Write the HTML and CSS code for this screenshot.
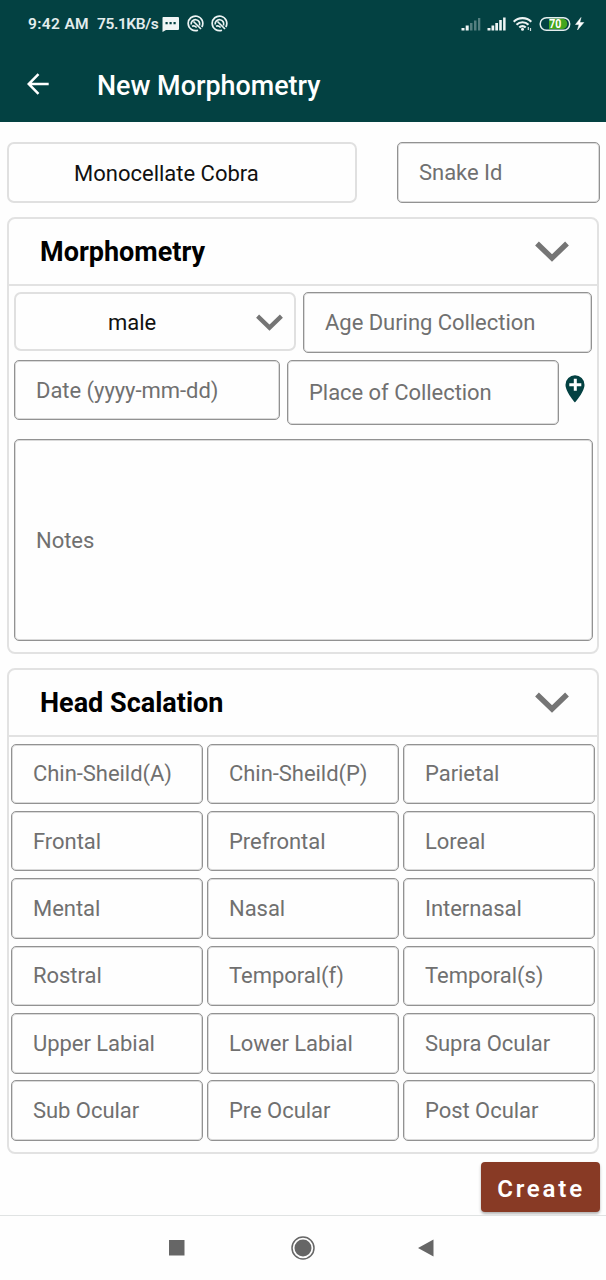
FILE: index.html
```html
<!DOCTYPE html>
<html lang="en">
<head>
<meta charset="utf-8">
<title>New Morphometry</title>
<link rel="stylesheet" href="styles.css">
</head>
<body>
<div class="screen">
  <header class="top">
    <div class="status">
      <span class="clock">9:42 AM</span>
      <span class="speed">75.1KB/s</span>
      <svg class="chat" width="17" height="16" viewBox="0 0 17 16"><path d="M1 1h15a1 1 0 0 1 1 1v11a1 1 0 0 1-1 1H4l-3.500 2V2a1 1 0 0 1 .5-1z" fill="#f0f5f5"/><path d="M3.500 6h2.200v2.200H3.500zM7.500 6h2.200v2.200H7.500zM11.500 6h2.200v2.200h-2.200z" fill="#034142"/></svg>
      <svg class="badge" width="17" height="17" viewBox="0 0 17 17" fill="none" stroke="#edf4f4"><path d="M11 15.200A7.300 7.300 0 1 1 14.800 12" stroke-width="1.700"/><path d="M4.200 9.500A4.300 4.300 0 1 1 12.500 10.500M6.500 6.500L14 14M5 11.200c1.500-.8 3-.3 4.700 1.300" stroke-width="1.700"/></svg>
      <svg class="badge" width="17" height="17" viewBox="0 0 17 17" fill="none" stroke="#edf4f4"><path d="M11 15.200A7.300 7.300 0 1 1 14.800 12" stroke-width="1.700"/><path d="M4.200 9.500A4.300 4.300 0 1 1 12.500 10.500M6.500 6.500L14 14M5 11.200c1.500-.8 3-.3 4.700 1.300" stroke-width="1.700"/></svg>
      <svg class="radios" width="126" height="18" viewBox="460 15 126 18">
        <g fill="#eef4f4"><path d="M461.500 28h3v2.500h-3zM465.700 25.500h3v5h-3z"/><path d="M470 23h2.500v7.500H470zM474 20.500h2.500v10H474zM478 18h2.300v12.500H478z" opacity=".35"/><path d="M487.500 28h3v2.500h-3zM491.500 25.500h2.700v5h-2.700zM495.300 23h2.700v7.500h-2.700zM499.200 20h2.600v10.500h-2.600zM503.100 17.500h2.500v13h-2.500z"/></g>
        <g fill="none" stroke="#eef4f4" stroke-width="2.100"><path d="M513.700 21.700a12.500 12.500 0 0 1 17.600 0M516.500 24.800a8.500 8.500 0 0 1 12 0M519.300 27.500a4.500 4.500 0 0 1 6.400 0"/></g>
        <circle cx="522.500" cy="29.300" r="1.500" fill="#eef4f4"/><path d="M528.300 27v3M530.500 28v3" stroke="#d0dddd" stroke-width="1.200"/>
        <path d="M549 18.500h13a5.300 5.300 0 0 1 0 10.600h-13z" fill="#43a51d"/>
        <rect x="540.200" y="17.700" width="29.500" height="12.600" rx="6.300" fill="none" stroke="#e5eeee" stroke-width="1.500"/>
        <text class="level" x="549.300" y="28.300" textLength="12" lengthAdjust="spacingAndGlyphs">70</text>
        <path d="M581 17.500l-5.500 7h3.500l-1.500 5.500 6.300-7.500h-4z" fill="#fff" stroke="#fff" stroke-width=".5"/>
      </svg>
    </div>
    <div class="appbar">
      <svg class="back" width="22" height="22" viewBox="0 0 22 22" fill="none" stroke="#fff" stroke-width="2.500"><path d="M21.700 11H2M11.500 1.200L1.700 11l9.800 9.800"/></svg>
      <h1>New Morphometry</h1>
    </div>
  </header>
  <main>
    <div class="identity">
      <div class="spinner species">Monocellate Cobra</div>
      <div class="field">Snake Id</div>
    </div>
    <section class="card morph">
      <h2>Morphometry<svg class="chev" width="34" height="21" viewBox="0 0 34 21"><path d="M2 2.500L17 17 32 2.500" fill="none" stroke="#757575" stroke-width="5.400"/></svg></h2>
      <div class="row first">
        <div class="spinner sex">male<svg class="chev-s" width="27" height="17" viewBox="0 0 34 21"><path d="M2 2.500L17 17 32 2.500" fill="none" stroke="#757575" stroke-width="5.400"/></svg></div>
        <div class="field age">Age During Collection</div>
      </div>
      <div class="row second-row">
        <div class="field date">Date (yyyy-mm-dd)</div>
        <div class="field place">Place of Collection</div>
        <svg class="pin" width="20" height="28" viewBox="0 0 20 28"><path d="M10 .3a9.500 9.500 0 0 0-9.500 9.500C.5 17 10 27.500 10 27.500S19.500 17 19.500 9.800A9.500 9.500 0 0 0 10 .3z" fill="#034142"/><path d="M10.300 3.800v12M4.300 9.800h12" stroke="#fff" stroke-width="3"/></svg>
      </div>
      <div class="field notes">Notes</div>
    </section>
    <section class="card head">
      <h2>Head Scalation<svg class="chev" width="34" height="21" viewBox="0 0 34 21"><path d="M2 2.500L17 17 32 2.500" fill="none" stroke="#757575" stroke-width="5.400"/></svg></h2>
      <div class="grid">
        <div class="field">Chin-Sheild(A)</div><div class="field">Chin-Sheild(P)</div><div class="field">Parietal</div>
        <div class="field">Frontal</div><div class="field">Prefrontal</div><div class="field">Loreal</div>
        <div class="field">Mental</div><div class="field">Nasal</div><div class="field">Internasal</div>
        <div class="field">Rostral</div><div class="field">Temporal(f)</div><div class="field">Temporal(s)</div>
        <div class="field">Upper Labial</div><div class="field">Lower Labial</div><div class="field">Supra Ocular</div>
        <div class="field">Sub Ocular</div><div class="field">Pre Ocular</div><div class="field">Post Ocular</div>
      </div>
    </section>
    <button class="create">Create</button>
  </main>
  <nav class="nav">
    <svg width="606" height="64" viewBox="0 1216 606 64"><g fill="#666"><path d="M169 1240h15.500v15.500H169zM433.500 1239.500v17l-15.500-8.500z"/><circle cx="303" cy="1248" r="8.500"/></g><circle cx="303" cy="1248" r="11" fill="none" stroke="#666" stroke-width="1.500"/></svg>
  </nav>
</div>
</body>
</html>
```
FILE: styles.css
```css
* { box-sizing: border-box; }
body { margin: 0; background: #fefefe; font-family: Roboto, sans-serif; }
svg { display: block; flex: none; }
.screen { width: 606px; height: 1280px; display: flex; flex-direction: column; overflow: hidden; }
.top { height: 122px; background: #034142; color: #fff; flex: none; }
.status { height: 48px; padding-left: 28px; display: flex; align-items: center; font-size: 15.500px; font-weight: 600; color: #e3eded; white-space: nowrap; }
.clock { width: 69px; flex: none; letter-spacing: 0.35px; }
.speed { width: 65px; flex: none; letter-spacing: -0.4px; }
.badge { margin: -2px 0 0 7.500px; }
.radios { margin-left: auto; margin-right: 20px; }
.level { font: 700 12.500px Roboto, sans-serif; fill: #fff; }
.appbar { height: 74px; padding: 0 0 2px 27px; display: flex; align-items: center; }
h1 { margin: 4px 0 0 48px; font-size: 26.900px; line-height: 32px; font-weight: 500; }
main { height: 1093px; flex: none; padding: 20px 6px 0 7px; display: flex; flex-direction: column; }
.identity { display: flex; justify-content: space-between; height: 61px; flex: none; }
.identity .field { width: 203px; }
.spinner { border: 2px solid #e0e0e0; border-radius: 7px; display: flex; align-items: center; padding-top: 1px; font-size: 22px; color: #111; }
.species { width: 350px; padding-left: 65px; }
.field { border: 1px solid #929292; box-shadow: inset 0 0 0 1px #dadada; border-radius: 5px; display: flex; align-items: center; padding-left: 21px; font-size: 22px; letter-spacing: -0.04px; color: #707070; white-space: nowrap; }
.card { width: 592px; border: 2px solid #e2e2e2; border-radius: 8px; flex: none; }
.morph { height: 437px; margin-top: 14px; }
.head { height: 486px; margin-top: 14px; }
h2 { margin: 0; height: 67px; border-bottom: 2px solid #e2e2e2; padding: 0 28px 0 31px; display: flex; align-items: center; justify-content: space-between; font-size: 27px; font-weight: 700; color: #000; }
.chev { margin-top: -1px; }
.row { display: flex; margin-left: 5px; }
.first { margin-top: 6px; gap: 7px; height: 61px; }
.sex { width: 282px; height: 59px; padding: 1px 11px 0 92px; justify-content: space-between; }
.age { width: 289px; }
.second-row { margin-top: 7px; height: 65px; gap: 7px; }
.date { width: 266px; height: 60px; }
.place { width: 272px; height: 65px; }
.pin { margin: 15px 0 0 -1px; }
.notes { margin: 14px 0 0 5px; width: 579px; height: 202px; }
.grid { display: grid; grid-template-columns: repeat(3, 192px); grid-auto-rows: 60.500px; column-gap: 4px; row-gap: 6.900px; margin: 6.500px 0 0 2px; }
.create { align-self: flex-end; margin-top: 8px; width: 119px; height: 50px; flex: none; border: 0; border-radius: 4px; background: #883a25; color: #fff; font: 600 24px Roboto, sans-serif; letter-spacing: 2.800px; padding: 3px 0 0 1px; box-shadow: 0 2px 3px rgba(0,0,0,.3); }
.nav { height: 65px; border-top: 1px solid #e0e3e3; background: #fefefe; flex: none; }
```
